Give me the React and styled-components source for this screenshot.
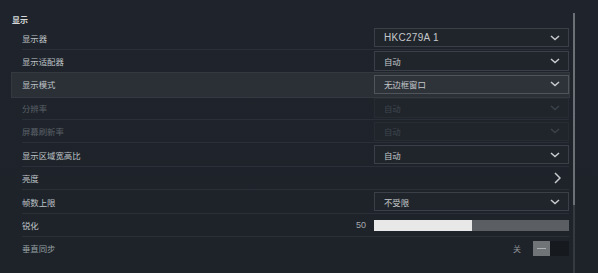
import React from 'react';
import styled, { createGlobalStyle } from 'styled-components';

const GlobalStyle = createGlobalStyle`
  html, body {
    margin: 0;
    padding: 0;
    background: #1d222a;
  }
  * {
    box-sizing: border-box;
  }
`;

const Page = styled.div`
  width: 598px;
  height: 273px;
  overflow: hidden;
  display: flex;
  padding: 13px 0 0 12px;
  background: linear-gradient(180deg, #1f242c 0%, #1e232a 100%);
  font-family: "Noto Sans CJK SC", "Noto Sans", sans-serif;
`;

const Main = styled.div`
  width: 557px;
  display: flex;
  flex-direction: column;
`;

const Header = styled.div`
  height: 13.3px;
  font-size: 8px;
  font-weight: 700;
  line-height: 13px;
  color: #d6d8da;
`;

const Row = styled.div`
  height: 23.45px;
  padding-left: 10px;
  display: flex;
  background: ${(p) => (p.$active ? '#2b3037' : 'transparent')};
  outline: ${(p) => (p.$active ? '1px solid #343940' : 'none')};
`;

const RowInner = styled.div`
  flex: 1;
  display: flex;
  align-items: center;
  border-bottom: 1px solid ${(p) => (p.$noLine ? 'transparent' : '#2a3038')};
`;

const Label = styled.div`
  flex: 1;
  font-size: 8.4px;
  color: ${(p) => (p.$dim ? '#5a6068' : p.$muted ? '#97a0a3' : '#bfc3c7')};
`;

const Select = styled.div`
  width: 195px;
  height: 19.5px;
  display: flex;
  align-items: center;
  justify-content: space-between;
  padding: 0 8px 0 9px;
  background: ${(p) => (p.$active ? '#2e333a' : '#20252c')};
  border: 1px solid ${(p) => (p.$dim ? '#272c33' : p.$active ? '#50555c' : '#3b4048')};
  font-size: 8.4px;
  color: ${(p) => (p.$dim ? '#3f454c' : '#c4c7ca')};
`;

const Latin = styled.span`
  font-family: "Liberation Sans", "Noto Sans", sans-serif;
  font-size: 10px;
  letter-spacing: 0.3px;
`;

const Arrow = styled.div`
  width: 195px;
  display: flex;
  justify-content: flex-end;
  padding-right: 8px;
`;

const SliderWrap = styled.div`
  display: flex;
  align-items: center;
  gap: 8px;
`;

const Value = styled.span`
  font-family: "Liberation Sans", sans-serif;
  font-size: 9px;
  color: #a5a9ad;
`;

const Track = styled.div`
  width: 195px;
  height: 11px;
  background: #5b5f64;
  display: flex;
`;

const Fill = styled.div`
  height: 100%;
  background: #e8e8e8;
`;

const ToggleWrap = styled.div`
  display: flex;
  align-items: center;
  gap: 12px;
`;

const ToggleText = styled.span`
  font-size: 8px;
  color: #8d9296;
`;

const Toggle = styled.div`
  width: 36px;
  height: 15px;
  display: flex;
  background: #161a1f;
`;

const Knob = styled.div`
  width: 17px;
  height: 100%;
  background: #717477;
  display: flex;
  align-items: center;
  justify-content: center;
  &::before {
    content: '';
    width: 9px;
    height: 1.5px;
    background: #aeb0b3;
  }
`;

const Scroll = styled.div`
  width: 2px;
  margin-left: 4px;
  display: flex;
  flex-direction: column;
  background: #353a41;
`;

const Thumb = styled.div`
  height: 192px;
  background: #6b7077;
`;

const Chevron = ({ dim }) => (
  <svg width="10" height="6" viewBox="0 0 10 6">
    <path d="M1 1l4 3.6L9 1" fill="none" stroke={dim ? '#3c4249' : '#c8cbce'} strokeWidth="1.5" />
  </svg>
);

const ChevronRight = () => (
  <svg width="7" height="12" viewBox="0 0 7 12">
    <path d="M1 1l5 5-5 5" fill="none" stroke="#c8cbce" strokeWidth="1.5" />
  </svg>
);

const rows = [
  { label: '显示器', type: 'select', value: 'HKC279A 1', latin: true },
  { label: '显示适配器', type: 'select', value: '自动' },
  { label: '显示模式', type: 'select', value: '无边框窗口', active: true },
  { label: '分辨率', type: 'select', value: '自动', dim: true },
  { label: '屏幕刷新率', type: 'select', value: '自动', dim: true },
  { label: '显示区域宽高比', type: 'select', value: '自动' },
  { label: '亮度', type: 'arrow' },
  { label: '帧数上限', type: 'select', value: '不受限' },
  { label: '锐化', type: 'slider', value: 50 },
  { label: '垂直同步', type: 'toggle', value: '关', muted: true },
];

const Control = ({ row }) => {
  if (row.type === 'select') {
    return (
      <Select $dim={row.dim} $active={row.active}>
        {row.latin ? <Latin>{row.value}</Latin> : <span>{row.value}</span>}
        <Chevron dim={row.dim} />
      </Select>
    );
  }
  if (row.type === 'arrow') {
    return (
      <Arrow>
        <ChevronRight />
      </Arrow>
    );
  }
  if (row.type === 'slider') {
    return (
      <SliderWrap>
        <Value>{row.value}</Value>
        <Track>
          <Fill style={{ width: `${row.value}%` }} />
        </Track>
      </SliderWrap>
    );
  }
  return (
    <ToggleWrap>
      <ToggleText>{row.value}</ToggleText>
      <Toggle>
        <Knob />
      </Toggle>
    </ToggleWrap>
  );
};

export default function App() {
  return (
    <>
      <GlobalStyle />
      <Page>
        <Main>
          <Header>显示</Header>
          {rows.map((row, i) => (
            <Row key={i} $active={row.active}>
              <RowInner $noLine={row.active || i === rows.length - 1}>
                <Label $dim={row.dim} $muted={row.muted}>{row.label}</Label>
                <Control row={row} />
              </RowInner>
            </Row>
          ))}
        </Main>
        <Scroll>
          <Thumb />
        </Scroll>
      </Page>
    </>
  );
}
